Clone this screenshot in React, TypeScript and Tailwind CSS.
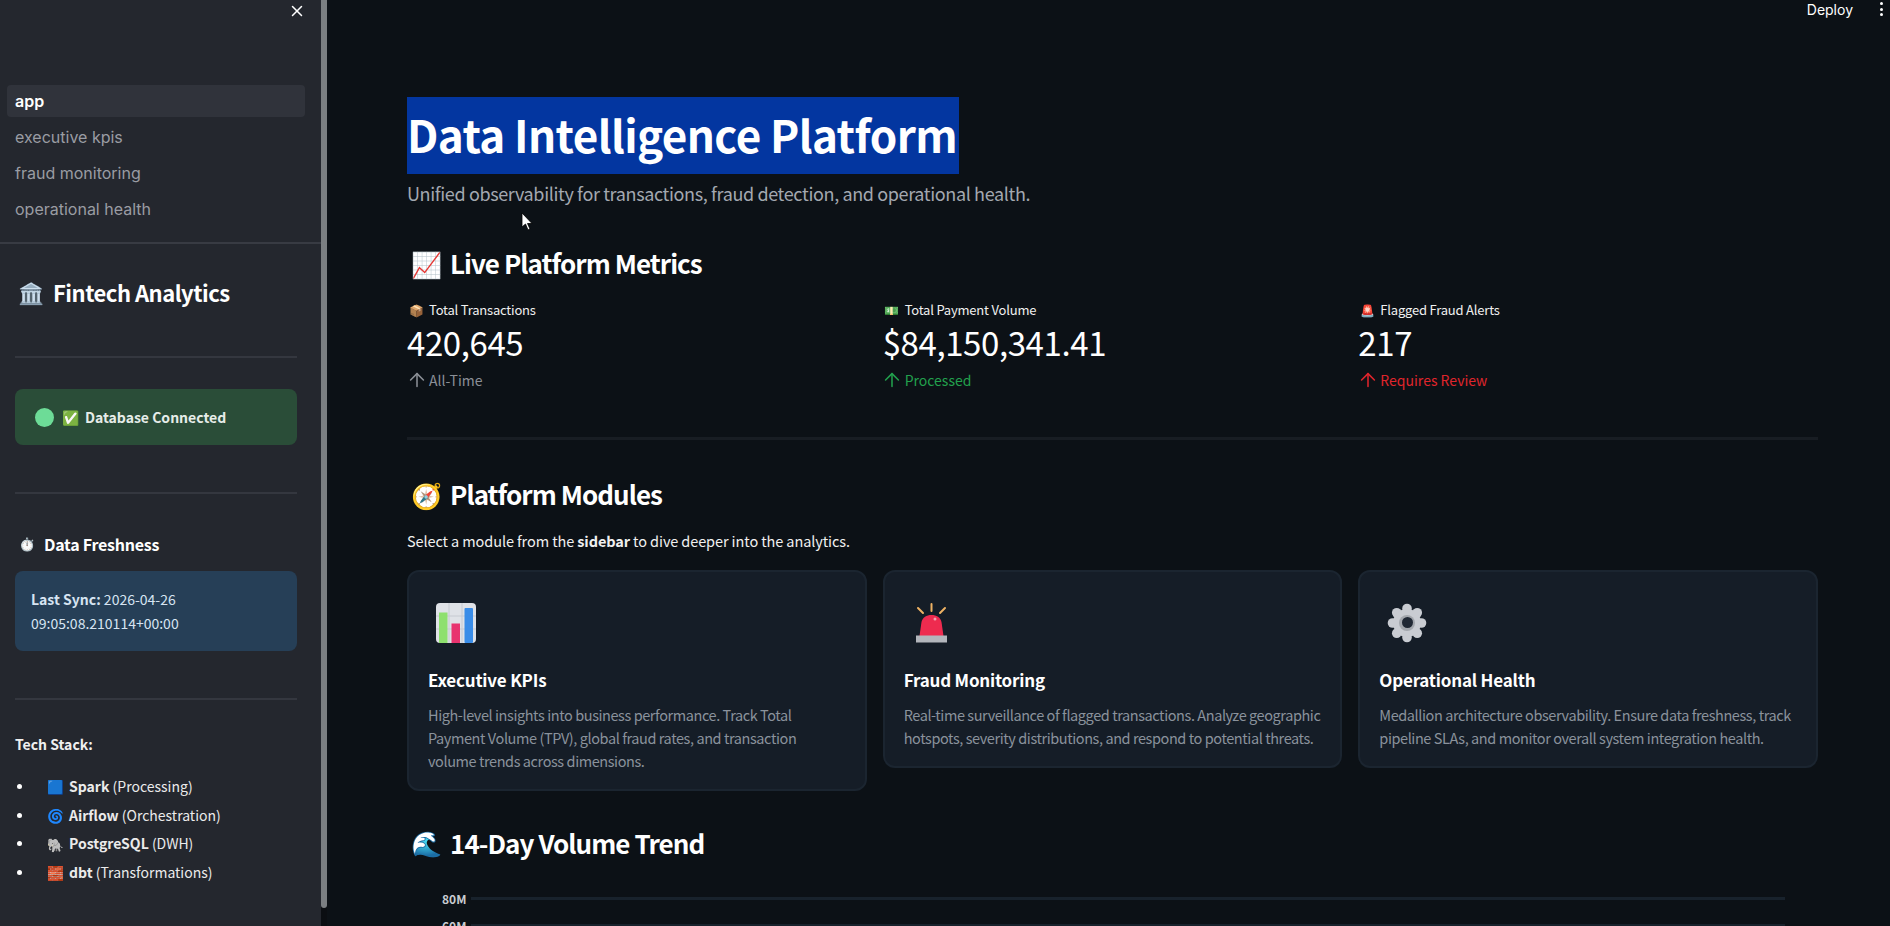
import React from 'react';
import { ArrowUp, X } from 'lucide-react';

const sans = { fontFamily: '"Noto Sans CJK SC", "Noto Color Emoji", sans-serif' };

const navItems = ['executive kpis', 'fraud monitoring', 'operational health'];

const metrics = [
  { emoji: '📦', label: 'Total Transactions', value: '420,645', delta: 'All-Time', color: 'text-[#8b8f96]' },
  { emoji: '💵', label: 'Total Payment Volume', value: '$84,150,341.41', delta: 'Processed', color: 'text-[#22a04d]' },
  { emoji: '🚨', label: 'Flagged Fraud Alerts', value: '217', delta: 'Requires Review', color: 'text-[#e0252c]' },
];

const stack = [
  { emoji: '🟦', name: 'Spark', role: '(Processing)' },
  { emoji: '🌀', name: 'Airflow', role: '(Orchestration)' },
  { emoji: '🐘', name: 'PostgreSQL', role: '(DWH)' },
  { emoji: '🧱', name: 'dbt', role: '(Transformations)' },
];

function ChartIcon() {
  return (
    <svg width="40" height="40" viewBox="0 0 40 40">
      <rect width="40" height="40" rx="4" fill="#dfe2e7" />
      <path d="M0 13h40M0 26h40M13 0v40M26 0v40" stroke="#c6cad1" strokeWidth="1" />
      <rect x="3" y="9.5" width="8.5" height="30.5" fill="#8ee06e" />
      <rect x="15.5" y="20.5" width="8.5" height="19.5" fill="#e8336f" />
      <rect x="28.5" y="5" width="8.5" height="35" rx="1" fill="#3a8de8" />
    </svg>
  );
}

function SirenIcon() {
  return (
    <svg width="40" height="40" viewBox="0 0 40 40">
      <path d="M6 5l5 5M19.5 1v7M33 5l-5 5" stroke="#eeb264" strokeWidth="2" strokeLinecap="round" />
      <path d="M7.5 33l2-14c1-4.500 5-7 10-7s9 2.500 10 7l2 14z" fill="#ee2b4f" />
      <circle cx="23" cy="16" r="1.500" fill="#f3a0ae" />
      <rect x="4" y="32.500" width="31" height="7" fill="#b3b6bc" />
    </svg>
  );
}

function GearIcon() {
  const teeth = [0, 1, 2, 3, 4, 5, 6, 7];
  return (
    <svg width="40" height="40" viewBox="0 0 40 40">
      {teeth.map((i) => (
        <circle
          key={i}
          cx={20 + 14.5 * Math.cos((i * Math.PI) / 4 - Math.PI / 2)}
          cy={20 + 14.5 * Math.sin((i * Math.PI) / 4 - Math.PI / 2)}
          r="4.800"
          fill="#c9ccd2"
        />
      ))}
      <circle cx="20" cy="20" r="14" fill="#c9ccd2" />
      <circle cx="20" cy="20" r="8" fill="#a3a7ad" />
      <circle cx="20.500" cy="19.500" r="5.500" fill="#202834" />
    </svg>
  );
}

const modules = [
  {
    icon: <ChartIcon />,
    title: 'Executive KPIs',
    lines: [
      'High-level insights into business performance. Track Total',
      'Payment Volume (TPV), global fraud rates, and transaction',
      'volume trends across dimensions.',
    ],
  },
  {
    icon: <SirenIcon />,
    title: 'Fraud Monitoring',
    lines: [
      'Real-time surveillance of flagged transactions. Analyze geographic',
      'hotspots, severity distributions, and respond to potential threats.',
    ],
  },
  {
    icon: <GearIcon />,
    title: 'Operational Health',
    lines: [
      'Medallion architecture observability. Ensure data freshness, track',
      'pipeline SLAs, and monitor overall system integration health.',
    ],
  },
];

function Sidebar() {
  return (
    <aside className="relative w-[321px] h-full shrink-0 bg-[#24272e] overflow-hidden">
      <div className="h-[85px] flex justify-end items-start pt-[2px] pr-[15px]">
        <X className="w-[18px] h-[18px] text-white" strokeWidth={2} />
      </div>
      <nav className="h-[157px] px-[7px] font-['Inter'] text-[16px]">
        <div className="w-[298px] h-[32px] rounded-[4px] bg-[#30333b] pl-[8px] leading-[32px] font-semibold text-white">app</div>
        {navItems.map((n) => (
          <div key={n} className="h-[32px] mt-[4px] pl-[8px] leading-[32px] text-[#9a9ca3]">{n}</div>
        ))}
      </nav>
      <div className="h-[2px] bg-[#383b43]" />
      <div className="pl-[15px] pr-[24px]">
        <h2 className="mt-[31px] h-[34px] flex items-center text-[22px] tracking-[-0.5px] font-semibold text-white leading-none">
          <span className="w-[38px] pl-[3px] text-[21px]">🏛️</span>Fintech Analytics
        </h2>
        <div className="mt-[47px] h-[2px] bg-[#34373f]" />
        <div className="mt-[31px] h-[56px] rounded-[8px] bg-[#2a4d38] pl-[20px] flex items-center text-[14px] font-semibold text-[#e6ece8]">
          <span className="w-[19px] h-[19px] mr-[8px] rounded-full bg-[#6ddc97]" />
          <span className="w-[23px] text-[14px]">✅</span>Database Connected
        </div>
        <div className="mt-[47px] h-[2px] bg-[#34373f]" />
        <h3 className="mt-[34px] h-[32px] flex items-center text-[16px] tracking-[-0.25px] font-semibold text-white">
          <span className="w-[29px] pl-[4px] text-[13px]">⏱️</span>Data Freshness
        </h3>
        <div className="mt-[11px] h-[80px] rounded-[8px] bg-[#263f57] px-[16px] pt-[16px] text-[14px] leading-[24px] text-[#d6e4f2]">
          <strong className="font-semibold">Last Sync:</strong> 2026-04-26
          <br />
          09:05:08.210114+00:00
        </div>
        <div className="mt-[47px] h-[2px] bg-[#34373f]" />
        <p className="mt-[32px] text-[14px] leading-[24px] font-semibold text-[#f0f0f0]">Tech Stack:</p>
        <ul className="mt-[16px] text-[#ebebeb] text-[14px]">
          {stack.map((s) => (
            <li key={s.name} className="h-[28.7px] flex items-center">
              <span className="w-[5px] h-[5px] rounded-full bg-white ml-[2px] mr-[25px]" />
              <span className="w-[22px] text-[13.5px]">{s.emoji}</span>
              <span><strong className="font-semibold">{s.name}</strong> {s.role}</span>
            </li>
          ))}
        </ul>
      </div>
    </aside>
  );
}

function SectionHeading({ emoji, children }: { emoji: string; children: React.ReactNode }) {
  return (
    <h3 className="flex items-center h-[40px] text-[26px] tracking-[-0.95px] font-semibold text-white leading-none">
      <span className="w-[43px] pl-[4px] text-[25px] tracking-normal">{emoji}</span>
      {children}
    </h3>
  );
}

export default function App() {
  return (
    <div className="relative flex w-[1890px] h-[926px] overflow-hidden bg-[#0c1116]" style={sans}>
      <Sidebar />

      {/* sidebar scrollbar */}
      <div className="w-[6px] h-full shrink-0 bg-[#0b0e12]">
        <div className="w-[6px] h-[908px] rounded-b-[3px] bg-[#7b7f82]" />
      </div>

      <main className="flex-1 pl-[80px] pr-[72px] min-w-0">
        <div className="flex justify-end h-0 -mr-[72px]">
          <div className="flex items-start -mt-[1px] font-['Inter'] text-[14px] text-white h-[20px]">
            <span className="mr-[27px]">Deploy</span>
            <span className="flex flex-col gap-[2.5px] mt-[3px] mr-[7px]">
              <i className="block w-[3px] h-[3px] rounded-full bg-white" />
              <i className="block w-[3px] h-[3px] rounded-full bg-white" />
              <i className="block w-[3px] h-[3px] rounded-full bg-white" />
            </span>
          </div>
        </div>

        <h1 className="pt-[97px] h-[174px] text-[44px] tracking-[-0.6px] font-bold text-white leading-[74px]">
          <span className="inline-block h-[77px] bg-[#0336a0] pr-[2px]">Data Intelligence Platform</span>
        </h1>
        <p className="mt-[6px] text-[18px] tracking-[-0.37px] leading-[26px] text-[#a3a8b0]">
          Unified observability for transactions, fraud detection, and operational health.
        </p>

        <div className="mt-[37px]">
          <SectionHeading emoji="📈">Live Platform Metrics</SectionHeading>
        </div>

        <div className="mt-[17px] grid grid-cols-3 gap-x-[16px]">
          {metrics.map((m) => (
            <div key={m.label}>
              <div className="h-[20px] flex items-center text-[13px] tracking-[-0.2px] text-[#f0f0f0]">
                <span className="w-[22px] pl-[2px] text-[12px] tracking-normal">{m.emoji}</span>
                {m.label}
              </div>
              <div className="-mt-[2px] h-[48px] text-[33px] tracking-[-0.4px] leading-[48px] text-white">{m.value}</div>
              <div className={`mt-[4px] h-[20px] flex items-center text-[14px] ${m.color}`}>
                <ArrowUp className="w-[22px] h-[22px] -ml-[1.5px] mr-[1.5px]" strokeWidth={1.7} />
                {m.delta}
              </div>
            </div>
          ))}
        </div>

        <div className="mt-[47px] h-[3px] bg-[#181d23]" />

        <div className="mt-[34px]">
          <SectionHeading emoji="🧭">Platform Modules</SectionHeading>
        </div>

        <p className="mt-[14px] text-[14.5px] tracking-[-0.1px] leading-[26px] text-[#f0f0f0]">
          Select a module from the <strong className="font-semibold">sidebar</strong> to dive deeper into the analytics.
        </p>

        <div className="mt-[15.5px] grid grid-cols-3 gap-x-[16px] items-start">
          {modules.map((m) => (
            <div key={m.title} className="rounded-[12px] border-2 border-[#1b2530] bg-[#151d27] pl-[19px] pr-[16px] pt-[19px] pb-[17px]">
              <div className="h-[56px] pt-[12px] pl-[8px]">{m.icon}</div>
              <h4 className="mt-[19px] text-[17px] tracking-[-0.2px] leading-[28px] font-semibold text-white">{m.title}</h4>
              <p className="mt-[9px] text-[14.5px] tracking-[-0.42px] leading-[23px] whitespace-nowrap text-[#8a929c]">
                {m.lines.map((line) => (
                  <span key={line} className="block">{line}</span>
                ))}
              </p>
            </div>
          ))}
        </div>

        <div className="mt-[32px]">
          <SectionHeading emoji="🌊">14-Day Volume Trend</SectionHeading>
        </div>

        {/* chart, cut off by the window */}
        <div className="mt-[34.5px] flex flex-col gap-[24px] pr-[33px] text-[12px] font-semibold text-[#c9ccd1]">
          {['80M', '60M'].map((t) => (
            <div key={t} className="flex items-center h-[3px]">
              <span className="w-[55px] pl-[35px]">{t}</span>
              <span className="ml-[9px] flex-1 h-[3px] bg-[#18222c]" />
            </div>
          ))}
        </div>
      </main>

      {/* mouse cursor */}
      <svg className="absolute left-[521px] top-[212px] w-[12px] h-[19px]" viewBox="0 0 12 19">
        <path d="M1 1v14l3.5-3 2.5 6 2-1-2.5-5.5H11z" fill="#fff" stroke="#000" strokeWidth="0.8" />
      </svg>
    </div>
  );
}
